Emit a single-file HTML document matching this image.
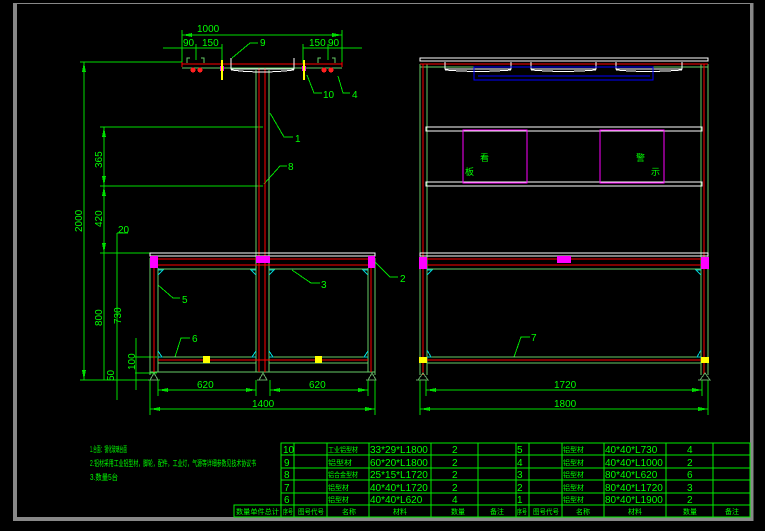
<!DOCTYPE html>
<html><head><meta charset="utf-8"><style>
html,body{margin:0;padding:0;background:#000;width:765px;height:531px;overflow:hidden}
svg{display:block}
text{font-family:"Liberation Sans Narrow","Liberation Sans","Noto Sans CJK SC",sans-serif;fill:#00ff00}
</style></head><body>
<svg width="765" height="531" viewBox="0 0 765 531" xmlns="http://www.w3.org/2000/svg" shape-rendering="crispEdges">
<rect x="15" y="3.5" width="736.5" height="516" fill="none" stroke="#888" stroke-width="1"/>
<rect x="13" y="3" width="4" height="518" fill="#888"/>
<rect x="750" y="3" width="3.5" height="518" fill="#888"/>
<rect x="13" y="517" width="740" height="4" fill="#888"/>

<g fill="none" stroke-width="1">
<g stroke="#00dd00">
<line x1="182" y1="35" x2="342" y2="35"/>
<line x1="182" y1="30" x2="182" y2="64"/><line x1="342" y1="30" x2="342" y2="64"/>
<line x1="163" y1="48" x2="222" y2="48"/><line x1="303" y1="48" x2="362" y2="48"/>
<line x1="196" y1="44" x2="196" y2="60"/><line x1="222" y1="44" x2="222" y2="64"/>
<line x1="303" y1="44" x2="303" y2="64"/><line x1="328" y1="44" x2="328" y2="60"/>
<line x1="80" y1="62" x2="182" y2="62"/>
<line x1="84" y1="62" x2="84" y2="380"/>
<line x1="80" y1="380" x2="160" y2="380"/>
<line x1="100" y1="127" x2="263" y2="127"/>
<line x1="100" y1="186" x2="263" y2="186"/>
<line x1="104" y1="127" x2="104" y2="380"/>
<line x1="100" y1="253" x2="150" y2="253"/>
<line x1="117" y1="233" x2="117" y2="400"/>
<line x1="117" y1="233" x2="128" y2="233"/>
<line x1="135" y1="357" x2="157" y2="357"/>
<line x1="135" y1="373" x2="157" y2="373"/>
<line x1="136" y1="338" x2="136" y2="390"/>
<line x1="158" y1="390" x2="256" y2="390"/><line x1="270" y1="390" x2="368" y2="390"/>
<line x1="150" y1="409" x2="375" y2="409"/>
<line x1="150" y1="380" x2="150" y2="415"/><line x1="375" y1="380" x2="375" y2="415"/>
<line x1="158" y1="380" x2="158" y2="396"/><line x1="256" y1="380" x2="256" y2="396"/>
<line x1="270" y1="380" x2="270" y2="396"/><line x1="368" y1="380" x2="368" y2="396"/>
<polyline points="232,58 250,43 258,43"/>
<polyline points="307,75 314,93 322,93"/>
<polyline points="338,76 343,93 350,93"/>
<polyline points="270,113 284,137 293,137"/>
<polyline points="264,184 280,166 287,166"/>
<polyline points="158,285 173,298 180,298"/>
<polyline points="292,270 311,283 320,283"/>
<polyline points="375,262 390,277 398,277"/>
<polyline points="175,357 181,338 190,338"/>
<polyline points="514,357 521,337 530,337"/>
<line x1="426" y1="390" x2="702" y2="390"/>
<line x1="420" y1="409" x2="708" y2="409"/>
<line x1="420" y1="380" x2="420" y2="415"/><line x1="708" y1="380" x2="708" y2="415"/>
<line x1="426" y1="380" x2="426" y2="396"/><line x1="702" y1="380" x2="702" y2="396"/>
</g>
<g fill="#00dd00" stroke="none">
<polygon points="182,35 192,33 192,37"/><polygon points="342,35 332,33 332,37"/>
<polygon points="84,62 82,72 86,72"/><polygon points="84,380 82,370 86,370"/>
<polygon points="104,127 102,137 106,137"/><polygon points="104,186 102,176 106,176"/>
<polygon points="104,186 102,196 106,196"/><polygon points="104,253 102,243 106,243"/>
<polygon points="158,390 168,388 168,392"/><polygon points="256,390 246,388 246,392"/>
<polygon points="270,390 280,388 280,392"/><polygon points="368,390 358,388 358,392"/>
<polygon points="150,409 160,407 160,411"/><polygon points="375,409 365,407 365,411"/>
<polygon points="426,390 436,388 436,392"/><polygon points="702,390 692,388 692,392"/>
<polygon points="420,409 430,407 430,411"/><polygon points="708,409 698,407 698,411"/>
</g>

<g stroke="#66cc66">
<line x1="182" y1="68" x2="342" y2="68"/>
<line x1="256" y1="70" x2="256" y2="372"/><line x1="269" y1="70" x2="269" y2="372"/>
<line x1="150" y1="258" x2="150" y2="375"/><line x1="158" y1="268" x2="158" y2="372"/>
<line x1="368" y1="268" x2="368" y2="372"/><line x1="375" y1="258" x2="375" y2="375"/>
<line x1="158" y1="269" x2="256" y2="269"/><line x1="269" y1="269" x2="368" y2="269"/>
<line x1="158" y1="357" x2="256" y2="357"/><line x1="269" y1="357" x2="368" y2="357"/>
<line x1="158" y1="363" x2="256" y2="363"/><line x1="269" y1="363" x2="368" y2="363"/>
<line x1="150" y1="372" x2="375" y2="372"/>
<polyline points="187,63 187,58 190,58"/><polyline points="204,63 204,58 201,58"/>
<polyline points="318,63 318,58 321,58"/><polyline points="335,63 335,58 332,58"/>
</g>
<g stroke="#ff0000">
<line x1="182" y1="64" x2="342" y2="64"/>
<line x1="182" y1="62" x2="182" y2="67"/><line x1="342" y1="62" x2="342" y2="67"/>
<line x1="259" y1="68" x2="259" y2="372"/><line x1="265" y1="68" x2="265" y2="372"/>
<line x1="150" y1="259" x2="375" y2="259"/><line x1="150" y1="265" x2="375" y2="265"/>
<line x1="154" y1="266" x2="154" y2="372"/><line x1="371" y1="266" x2="371" y2="372"/>
<line x1="158" y1="360" x2="368" y2="360"/>
</g>
<g stroke="#ffffff">
<polyline points="231,58 231,69 294,69 294,58"/>
<path d="M231,70 Q262,74 294,70"/>
<rect x="150" y="253" width="225" height="3"/>
</g>
<g fill="#ff00ff" stroke="none">
<rect x="150" y="256" width="8" height="12"/><rect x="256" y="256" width="14" height="7"/><rect x="368" y="256" width="7" height="12"/>
<rect x="220" y="66" width="4" height="5"/><rect x="302" y="66" width="4" height="5"/>
</g>
<g fill="#ffff00" stroke="none">
<rect x="221" y="60" width="2" height="20"/><rect x="303" y="60" width="2" height="20"/>
<rect x="203" y="356" width="7" height="7"/><rect x="315" y="356" width="7" height="7"/>
</g>
<g fill="#ff2020" stroke="none">
<circle cx="193" cy="70" r="2.5"/><circle cx="200" cy="70" r="2.5"/>
<circle cx="324" cy="70" r="2.5"/><circle cx="331" cy="70" r="2.5"/>
</g>

<g stroke="#66cc66">
<line x1="420" y1="64" x2="420" y2="375"/><line x1="427" y1="64" x2="427" y2="375"/>
<line x1="701" y1="64" x2="701" y2="375"/><line x1="708" y1="64" x2="708" y2="375"/>
<line x1="420" y1="67" x2="708" y2="67"/>
<line x1="427" y1="269" x2="701" y2="269"/>
<line x1="427" y1="357" x2="701" y2="357"/>
<line x1="427" y1="363" x2="701" y2="363"/>
</g>
<g stroke="#ff0000">
<line x1="420" y1="64" x2="708" y2="64"/>
<line x1="423" y1="64" x2="423" y2="375"/><line x1="704" y1="64" x2="704" y2="375"/>
<line x1="420" y1="259" x2="708" y2="259"/><line x1="420" y1="265" x2="708" y2="265"/>
<line x1="420" y1="360" x2="708" y2="360"/>
</g>
<g stroke="#ffffff">
<rect x="420" y="58" width="288" height="3"/>
<polyline points="445,62 445,69 511,69 511,62"/><path d="M445,70 Q478,73 511,70"/>
<polyline points="531,62 531,69 596,69 596,62"/><path d="M531,70 Q563,73 596,70"/>
<polyline points="616,62 616,69 682,69 682,62"/><path d="M616,70 Q649,73 682,70"/>
<rect x="426" y="127" width="276" height="4"/>
<rect x="426" y="182" width="276" height="4"/>
<rect x="420" y="253" width="288" height="3"/>
</g>
<g stroke="#0000ff">
<rect x="474" y="67" width="179" height="13"/>
<line x1="478" y1="76" x2="650" y2="76"/>
</g>
<g stroke="#ff00ff">
<rect x="463" y="130" width="64" height="53"/>
<rect x="600" y="130" width="64" height="53"/>
</g>
<g fill="#ff00ff" stroke="none">
<rect x="419" y="257" width="8" height="12"/><rect x="557" y="256" width="14" height="7"/><rect x="701" y="257" width="8" height="12"/>
</g>
<g fill="#ffff00" stroke="none">
<rect x="419" y="357" width="8" height="6"/><rect x="701" y="357" width="8" height="6"/>
</g>
<g stroke="#00cccc">
<polyline points="427,270 432,270 427,275"/><polyline points="701,270 696,270 701,275"/>
<polyline points="427,350 431,357 427,357"/><polyline points="701,350 697,357 701,357"/>
<polyline points="158,270 163,270 158,275"/><polyline points="368,270 363,270 368,275"/>
<polyline points="256,270 251,270 256,275"/><polyline points="269,270 274,270 269,275"/>
<polyline points="158,351 162,357 158,357"/><polyline points="368,351 364,357 368,357"/>
<polyline points="256,351 252,357 256,357"/><polyline points="269,351 273,357 269,357"/>
</g>
<g stroke="#66aa66">
<polyline points="150,380 154,373 158,380 148,380"/><polyline points="259,380 263,373 267,380 257,380"/><polyline points="368,380 372,373 376,380 366,380"/>
<polyline points="418,380 423,373 428,380 416,380"/><polyline points="700,380 705,373 710,380 698,380"/>
</g>

<g stroke="#00ee00">
<rect x="281" y="443" width="469" height="74"/>
<rect x="234" y="505" width="47" height="12"/>
<line x1="281" y1="455" x2="750" y2="455"/><line x1="281" y1="468" x2="750" y2="468"/>
<line x1="281" y1="480" x2="750" y2="480"/><line x1="281" y1="493" x2="750" y2="493"/>
<line x1="281" y1="505" x2="750" y2="505"/>
<line x1="294" y1="443" x2="294" y2="517"/><line x1="327" y1="443" x2="327" y2="517"/>
<line x1="369" y1="443" x2="369" y2="517"/><line x1="431" y1="443" x2="431" y2="517"/>
<line x1="478" y1="443" x2="478" y2="517"/><line x1="516" y1="443" x2="516" y2="517"/>
<line x1="529" y1="443" x2="529" y2="517"/><line x1="562" y1="443" x2="562" y2="517"/>
<line x1="604" y1="443" x2="604" y2="517"/><line x1="666" y1="443" x2="666" y2="517"/>
<line x1="713" y1="443" x2="713" y2="517"/>
</g>
</g>

<g font-size="10">
<text x="197" y="32">1000</text>
<text x="183" y="46">90</text><text x="202" y="46">150</text>
<text x="309" y="46">150</text><text x="328" y="46">90</text>
<text x="260" y="46">9</text><text x="323" y="98">10</text><text x="352" y="98">4</text>
<text x="295" y="142">1</text><text x="288" y="170">8</text>
<text x="182" y="303">5</text><text x="321" y="288">3</text><text x="400" y="282">2</text>
<text x="192" y="342">6</text><text x="531" y="341">7</text>
<text x="197" y="388">620</text><text x="309" y="388">620</text>
<text x="252" y="407">1400</text>
<text x="554" y="388">1720</text><text x="554" y="407">1800</text>
<text x="118" y="233">20</text>
<text transform="translate(82,232) rotate(-90)">2000</text>
<text transform="translate(102,168) rotate(-90)">365</text>
<text transform="translate(102,227) rotate(-90)">420</text>
<text transform="translate(102,326) rotate(-90)">800</text>
<text transform="translate(121,324) rotate(-90)">730</text>
<text transform="translate(135,370) rotate(-90)">100</text>
<text transform="translate(114,381) rotate(-90)">50</text>
</g>
<g font-size="9">
<text x="480" y="161">看</text><text x="465" y="175">板</text>
<text x="636" y="161">警</text><text x="651" y="175">示</text>
</g>
<g font-size="8">
<text x="90" y="452" textLength="37" lengthAdjust="spacingAndGlyphs">1.台面：钢化玻璃台面</text>
<text x="90" y="466" textLength="166" lengthAdjust="spacingAndGlyphs">2.铝材采用工业铝型材，脚轮，配件，工业灯，气源等详细参数见技术协议书</text>
<text x="90" y="480" textLength="28" lengthAdjust="spacingAndGlyphs">3.数量5台</text>
</g>
<g font-size="10">
<text x="283" y="453">10</text><text x="284" y="466">9</text><text x="284" y="478">8</text><text x="284" y="491">7</text><text x="284" y="503">6</text>
<text x="517" y="453">5</text><text x="517" y="466">4</text><text x="517" y="478">3</text><text x="517" y="491">2</text><text x="517" y="503">1</text>
<text x="370" y="453">33*29*L1800</text><text x="370" y="466">60*20*L1800</text><text x="370" y="478">25*15*L1720</text><text x="370" y="491">40*40*L1720</text><text x="370" y="503">40*40*L620</text>
<text x="605" y="453">40*40*L730</text><text x="605" y="466">40*40*L1000</text><text x="605" y="478">80*40*L620</text><text x="605" y="491">80*40*L1720</text><text x="605" y="503">80*40*L1900</text>
<text x="452" y="453">2</text><text x="452" y="466">2</text><text x="452" y="478">2</text><text x="452" y="491">2</text><text x="452" y="503">4</text>
<text x="687" y="453">4</text><text x="687" y="466">2</text><text x="687" y="478">6</text><text x="687" y="491">3</text><text x="687" y="503">2</text>
</g>
<g font-size="7">
<text x="328" y="452" textLength="30" lengthAdjust="spacingAndGlyphs">工业铝型材</text><text x="328" y="465" textLength="24" lengthAdjust="spacingAndGlyphs">铝型材</text><text x="328" y="477" textLength="30" lengthAdjust="spacingAndGlyphs">铝合金型材</text><text x="328" y="490">铝型材</text><text x="328" y="502">铝型材</text>
<text x="563" y="452">铝型材</text><text x="563" y="465">铝型材</text><text x="563" y="477">铝型材</text><text x="563" y="490">铝型材</text><text x="563" y="502">铝型材</text>
<text x="236" y="514" textLength="43" lengthAdjust="spacingAndGlyphs">数量单件总计</text><text x="283" y="514" textLength="10" lengthAdjust="spacingAndGlyphs">序号</text><text x="298" y="514" textLength="26" lengthAdjust="spacingAndGlyphs">图号代号</text>
<text x="342" y="514">名称</text><text x="393" y="514">材料</text><text x="451" y="514">数量</text><text x="490" y="514">备注</text>
<text x="517" y="514" textLength="10" lengthAdjust="spacingAndGlyphs">序号</text><text x="533" y="514" textLength="26" lengthAdjust="spacingAndGlyphs">图号代号</text><text x="576" y="514">名称</text><text x="628" y="514">材料</text><text x="683" y="514">数量</text><text x="725" y="514">备注</text>
</g>
</svg>
</body></html>
